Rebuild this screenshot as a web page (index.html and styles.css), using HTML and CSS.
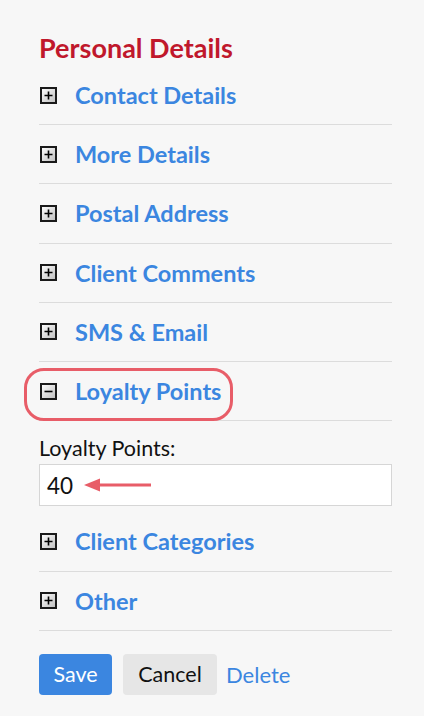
FILE: index.html
```html
<!DOCTYPE html>
<html>
<head>
<meta charset="utf-8">
<link rel="stylesheet" href="styles.css">
</head>
<body>
<div class="panel">
  <h2 class="title">Personal Details</h2>
  <ul class="sections">
    <li class="row"><span class="toggle"><svg viewBox="0 0 17 17" width="17" height="17"><defs><linearGradient id="g1" x1="0" y1="0" x2="1" y2="1"><stop offset="0" stop-color="#fff"/><stop offset="1" stop-color="#bdbdbd"/></linearGradient></defs><rect x="1" y="1" width="15" height="15" fill="url(#g1)" stroke="#1a1a1a" stroke-width="2"/><path d="M4.5 8.5h8M8.5 4.5v8" stroke="#000" stroke-width="1.6"/></svg></span><a class="link">Contact Details</a></li>
    <li class="row"><span class="toggle"><svg viewBox="0 0 17 17" width="17" height="17"><rect x="1" y="1" width="15" height="15" fill="url(#g1)" stroke="#1a1a1a" stroke-width="2"/><path d="M4.5 8.5h8M8.5 4.5v8" stroke="#000" stroke-width="1.6"/></svg></span><a class="link">More Details</a></li>
    <li class="row"><span class="toggle"><svg viewBox="0 0 17 17" width="17" height="17"><rect x="1" y="1" width="15" height="15" fill="url(#g1)" stroke="#1a1a1a" stroke-width="2"/><path d="M4.5 8.5h8M8.5 4.5v8" stroke="#000" stroke-width="1.6"/></svg></span><a class="link">Postal Address</a></li>
    <li class="row"><span class="toggle"><svg viewBox="0 0 17 17" width="17" height="17"><rect x="1" y="1" width="15" height="15" fill="url(#g1)" stroke="#1a1a1a" stroke-width="2"/><path d="M4.5 8.5h8M8.5 4.5v8" stroke="#000" stroke-width="1.6"/></svg></span><a class="link">Client Comments</a></li>
    <li class="row"><span class="toggle"><svg viewBox="0 0 17 17" width="17" height="17"><rect x="1" y="1" width="15" height="15" fill="url(#g1)" stroke="#1a1a1a" stroke-width="2"/><path d="M4.5 8.5h8M8.5 4.5v8" stroke="#000" stroke-width="1.6"/></svg></span><a class="link">SMS &amp; Email</a></li>
    <li class="row open"><span class="toggle"><svg viewBox="0 0 17 17" width="17" height="17"><rect x="1" y="1" width="15" height="15" fill="url(#g1)" stroke="#1a1a1a" stroke-width="2"/><path d="M4.5 8.5h8" stroke="#000" stroke-width="1.6"/></svg></span><a class="link">Loyalty Points</a><span class="highlight"></span></li>
    <li class="content">
      <label class="field-label">Loyalty Points:</label>
      <div class="field">
        <span class="field-value">40</span>
        <svg class="arrow" viewBox="0 0 68 16" width="68" height="16"><path d="M14 8H67" stroke="#e85d68" stroke-width="3"/><path d="M0 8L16 1.5V14.5Z" fill="#e85d68"/></svg>
      </div>
    </li>
    <li class="row"><span class="toggle"><svg viewBox="0 0 17 17" width="17" height="17"><rect x="1" y="1" width="15" height="15" fill="url(#g1)" stroke="#1a1a1a" stroke-width="2"/><path d="M4.5 8.5h8M8.5 4.5v8" stroke="#000" stroke-width="1.6"/></svg></span><a class="link">Client Categories</a></li>
    <li class="row"><span class="toggle"><svg viewBox="0 0 17 17" width="17" height="17"><rect x="1" y="1" width="15" height="15" fill="url(#g1)" stroke="#1a1a1a" stroke-width="2"/><path d="M4.5 8.5h8M8.5 4.5v8" stroke="#000" stroke-width="1.6"/></svg></span><a class="link">Other</a></li>
  </ul>
  <div class="actions">
    <button class="btn btn-primary">Save</button>
    <button class="btn btn-secondary">Cancel</button>
    <a class="delete">Delete</a>
  </div>
</div>
</body>
</html>
```
FILE: styles.css
```css
html, body {
  margin: 0;
  padding: 0;
  background: #f7f7f7;
}
body {
  font-family: Lato, "Open Sans", sans-serif;
  color: #111;
}
.panel {
  width: 353px;
  padding: 29px 0 0 39px;
}
.title {
  margin: 0;
  font-size: 27px;
  line-height: 37px;
  font-weight: 700;
  color: #c0182c;
}
.sections {
  list-style: none;
  margin: 0;
  padding: 0;
}
.row {
  position: relative;
  display: flex;
  align-items: center;
  height: 58.25px;
  border-bottom: 1px solid #dcdcdc;
}
.sections > .row:first-child {
  height: 58px;
}
.toggle {
  display: flex;
  width: 17px;
  height: 17px;
  margin-left: 1px;
  margin-right: 18px;
}
.link {
  font-size: 23.5px;
  font-weight: 700;
  color: #3b86e0;
  text-decoration: none;
}
.highlight {
  position: absolute;
  left: -15px;
  top: 6px;
  width: 203px;
  height: 47px;
  border: 3px solid #e85d68;
  border-radius: 20px;
}
.content {
  padding: 14px 0 6px;
}
.field-label {
  display: block;
  font-size: 21.5px;
  line-height: 26px;
  color: #111;
  margin-bottom: 3px;
}
.field {
  display: flex;
  align-items: center;
  height: 40px;
  border: 1px solid #d6d6d6;
  background: #fff;
  padding-left: 7px;
}
.field-value {
  font-size: 22.5px;
  color: #111;
}
.arrow {
  margin-left: 11px;
}
.actions {
  display: flex;
  align-items: center;
  margin-top: 23px;
}
.btn {
  font-family: Lato, sans-serif;
  font-size: 21.5px;
  height: 41px;
  border: none;
  border-radius: 4px;
  padding: 0;
  margin-right: 11px;
}
.btn-primary {
  background: #3b86e0;
  color: #fff;
  width: 73px;
}
.btn-secondary {
  background: #e6e6e6;
  color: #111;
  width: 94px;
  margin-right: 9px;
}
.delete {
  font-size: 22px;
  color: #3b86e0;
}
```
